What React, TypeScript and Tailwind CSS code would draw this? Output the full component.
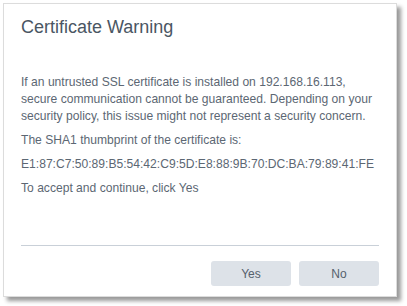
export default function App() {
  return (
    <div className="w-[407px] h-[306px] bg-white pt-[3px] pl-[3px]" style={{ fontFamily: '"Liberation Sans", Arial, sans-serif' }}>
      <div className="w-[394px] h-[294px] bg-white border border-[#dcdcdc] shadow-[4px_4px_4px_rgba(0,0,0,0.4)] flex flex-col px-[17px]">
        <h1 className="text-[18px] leading-[22px] text-[#4a5663] mt-[12px]">Certificate Warning</h1>

        <div className="mt-[36px] text-[12.1px] leading-[17px] text-[#5c6773] flex flex-col gap-[7px]">
          <p>
            If an untrusted SSL certificate is installed on 192.168.16.113, secure communication cannot be guaranteed. Depending on your security policy, this issue might not represent a security concern.
          </p>
          <p>The SHA1 thumbprint of the certificate is:</p>
          <p>E1:87:C7:50:89:B5:54:42:C9:5D:E8:88:9B:70:DC:BA:79:89:41:FE</p>
          <p>To accept and continue, click Yes</p>
        </div>

        <div className="mt-auto border-t border-[#c9d0d8]" />
        <div className="flex justify-end gap-[8px] pt-[15px] pb-[10px]">
          <button className="w-[80px] h-[25px] rounded-[3px] bg-[#dde2e8] text-[12px] text-[#56616d]">Yes</button>
          <button className="w-[80px] h-[25px] rounded-[3px] bg-[#dde2e8] text-[12px] text-[#56616d]">No</button>
        </div>
      </div>
    </div>
  );
}
